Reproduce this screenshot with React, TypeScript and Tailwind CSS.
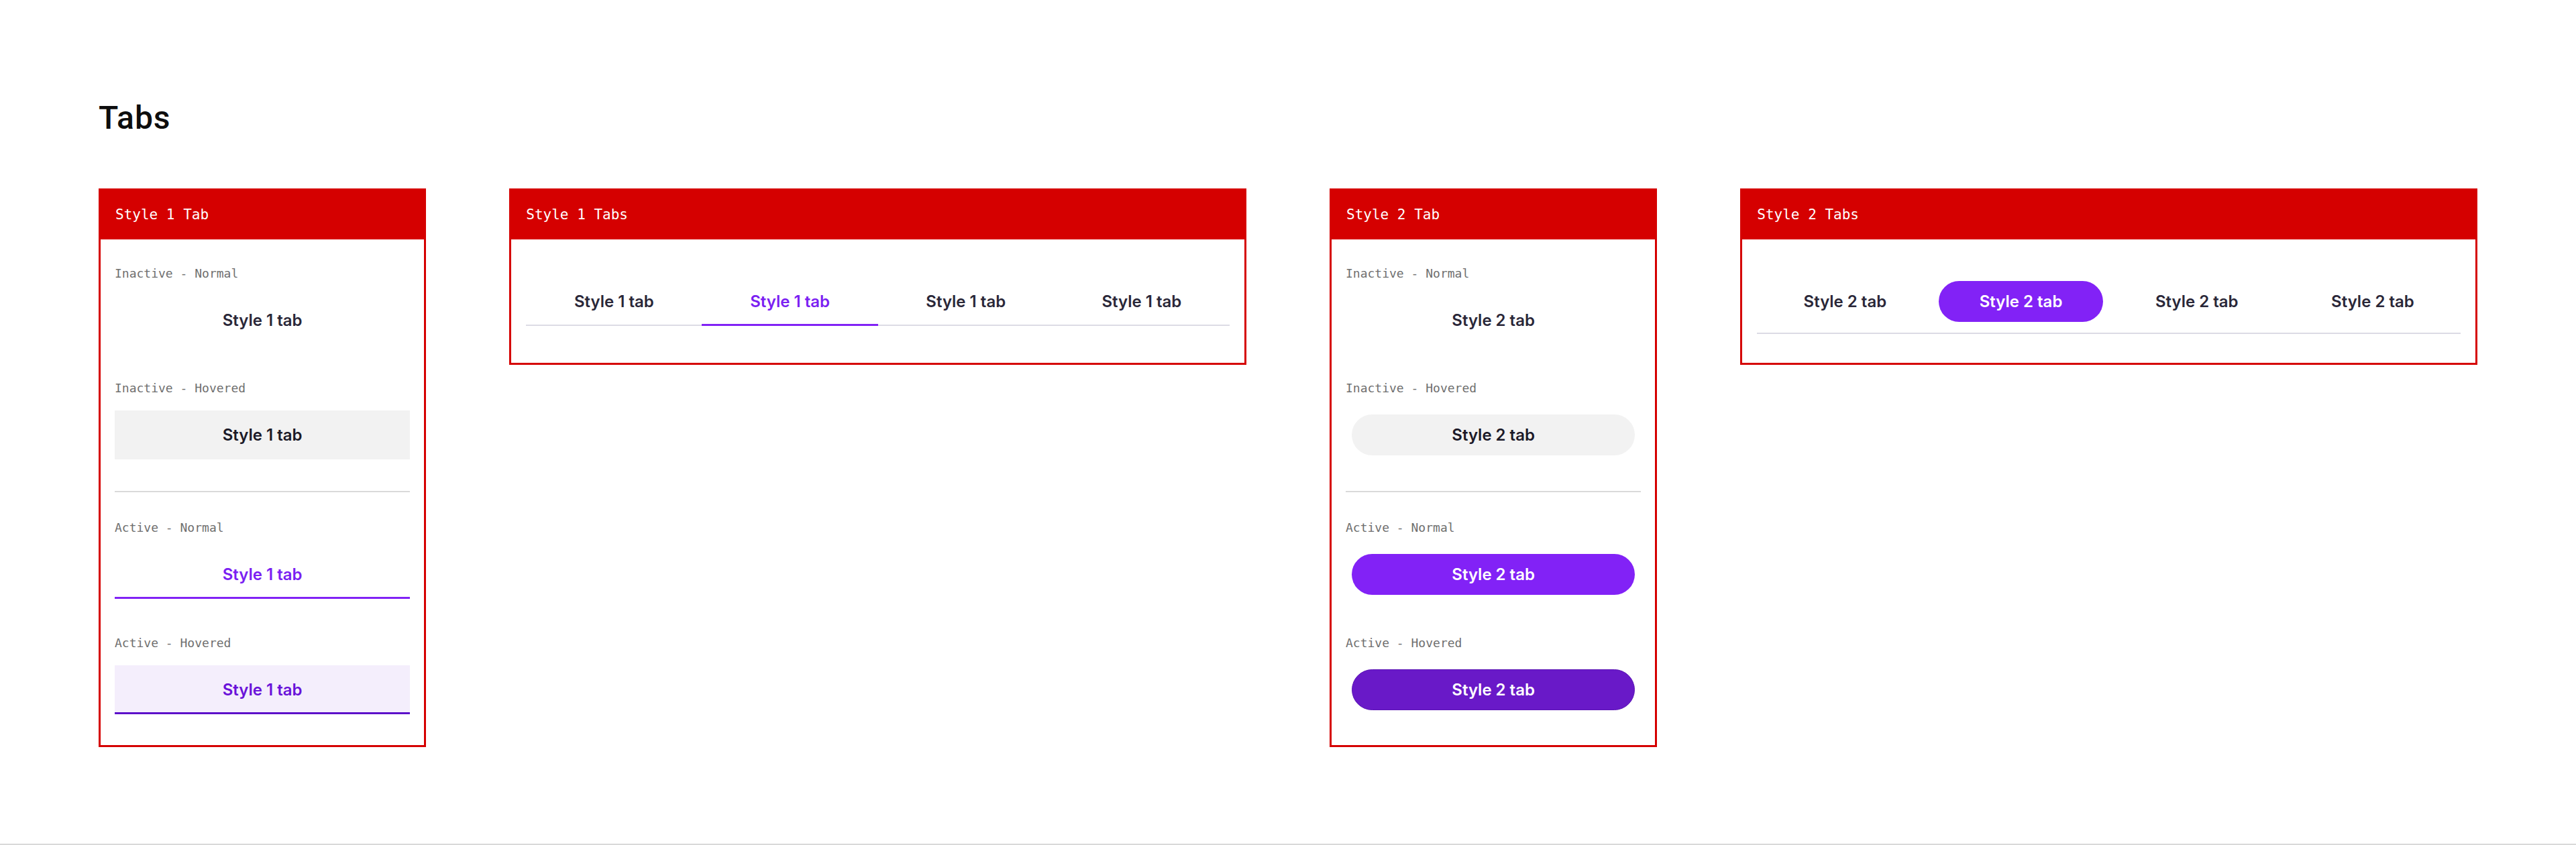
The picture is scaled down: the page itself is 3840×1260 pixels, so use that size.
import React from 'react';

const MONO = 'font-["DejaVu_Sans_Mono","Liberation_Mono",monospace]';
const TAB_FONT = 'font-["Inter","Noto_Sans",sans-serif] font-semibold text-[24px] leading-none';

function Card({ title, children }: { title: string; children: React.ReactNode }) {
  return (
    <div className="border-[3px] border-[#d50000] bg-white">
      <div className={`h-[73px] bg-[#d50000] px-[22px] flex items-center text-white text-[21px] ${MONO}`}>
        {title}
      </div>
      {children}
    </div>
  );
}

function Label({ children }: { children: React.ReactNode }) {
  return <div className={`text-[18px] leading-[24px] text-[#6f6f6f] mb-[21px] ${MONO}`}>{children}</div>;
}

type TabState = 'normal' | 'hovered' | 'active' | 'activeHovered';

function Style1Tab({ state, className = '' }: { state: TabState; className?: string }) {
  const look = {
    normal: 'text-[#2a2738] border-transparent',
    hovered: 'bg-[#f2f2f2] text-[#1c1a28] border-transparent',
    active: 'text-[#7b1ff2] border-[#8122f5]',
    activeHovered: 'bg-[#f4eefc] text-[#6a12d9] border-[#5c10c9]',
  }[state];
  return (
    <div className={`h-[73px] pt-[3px] border-b-[3px] flex items-center justify-center ${TAB_FONT} ${look} ${className}`}>
      Style 1 tab
    </div>
  );
}

function Style2Tab({ state, className = '' }: { state: TabState; className?: string }) {
  const look = {
    normal: 'text-[#2a2738]',
    hovered: 'bg-[#f2f2f2] text-[#1c1a28]',
    active: 'bg-[#8222f6] text-white',
    activeHovered: 'bg-[#6919c8] text-white border border-[#5a14b4]',
  }[state];
  return (
    <div className={`h-[73px] px-[9px] py-[6px] ${className}`}>
      <div className={`h-full rounded-full flex items-center justify-center ${TAB_FONT} ${look}`}>Style 2 tab</div>
    </div>
  );
}

function StateList({ kind }: { kind: 1 | 2 }) {
  const Tab = kind === 1 ? Style1Tab : Style2Tab;
  return (
    <div className="px-[21px] pt-[39px] pb-[46px]">
      <Label>Inactive - Normal</Label>
      <Tab state="normal" />
      <div className="mt-[53px]">
        <Label>Inactive - Hovered</Label>
        <Tab state="hovered" />
      </div>
      <div className="mt-[47px] h-[2px] bg-[#dadada]" />
      <div className="mt-[41px]">
        <Label>Active - Normal</Label>
        <Tab state="active" />
      </div>
      <div className="mt-[54px]">
        <Label>Active - Hovered</Label>
        <Tab state="activeHovered" />
      </div>
    </div>
  );
}

export default function App() {
  return (
    <div className="h-[1260px] bg-white border-b-2 border-[#d9d9d9] px-[147px] pt-[148px]">
      <h1 className='font-["Roboto",sans-serif] font-medium text-[48px] leading-[56px] tracking-[0.02em] text-[#0d0d0d]'>
        Tabs
      </h1>
      <div className="mt-[77px] grid grid-cols-[4fr_9fr_4fr_9fr] gap-[124px] items-start">
        <Card title="Style 1 Tab">
          <StateList kind={1} />
        </Card>

        <Card title="Style 1 Tabs">
          <div className="px-[22px] pt-[56px] pb-[55px]">
            <div className="grid grid-cols-4 shadow-[inset_0_-2px_0_#dcdbe5]">
              <Style1Tab state="normal" />
              <Style1Tab state="active" />
              <Style1Tab state="normal" />
              <Style1Tab state="normal" />
            </div>
          </div>
        </Card>

        <Card title="Style 2 Tab">
          <StateList kind={2} />
        </Card>

        <Card title="Style 2 Tabs">
          <div className="px-[22px] pt-[56px] pb-[43px]">
            <div className="grid grid-cols-4 pb-[10px] border-b-2 border-[#dcdbe5]">
              <Style2Tab state="normal" />
              <Style2Tab state="active" />
              <Style2Tab state="normal" />
              <Style2Tab state="normal" />
            </div>
          </div>
        </Card>
      </div>
    </div>
  );
}
